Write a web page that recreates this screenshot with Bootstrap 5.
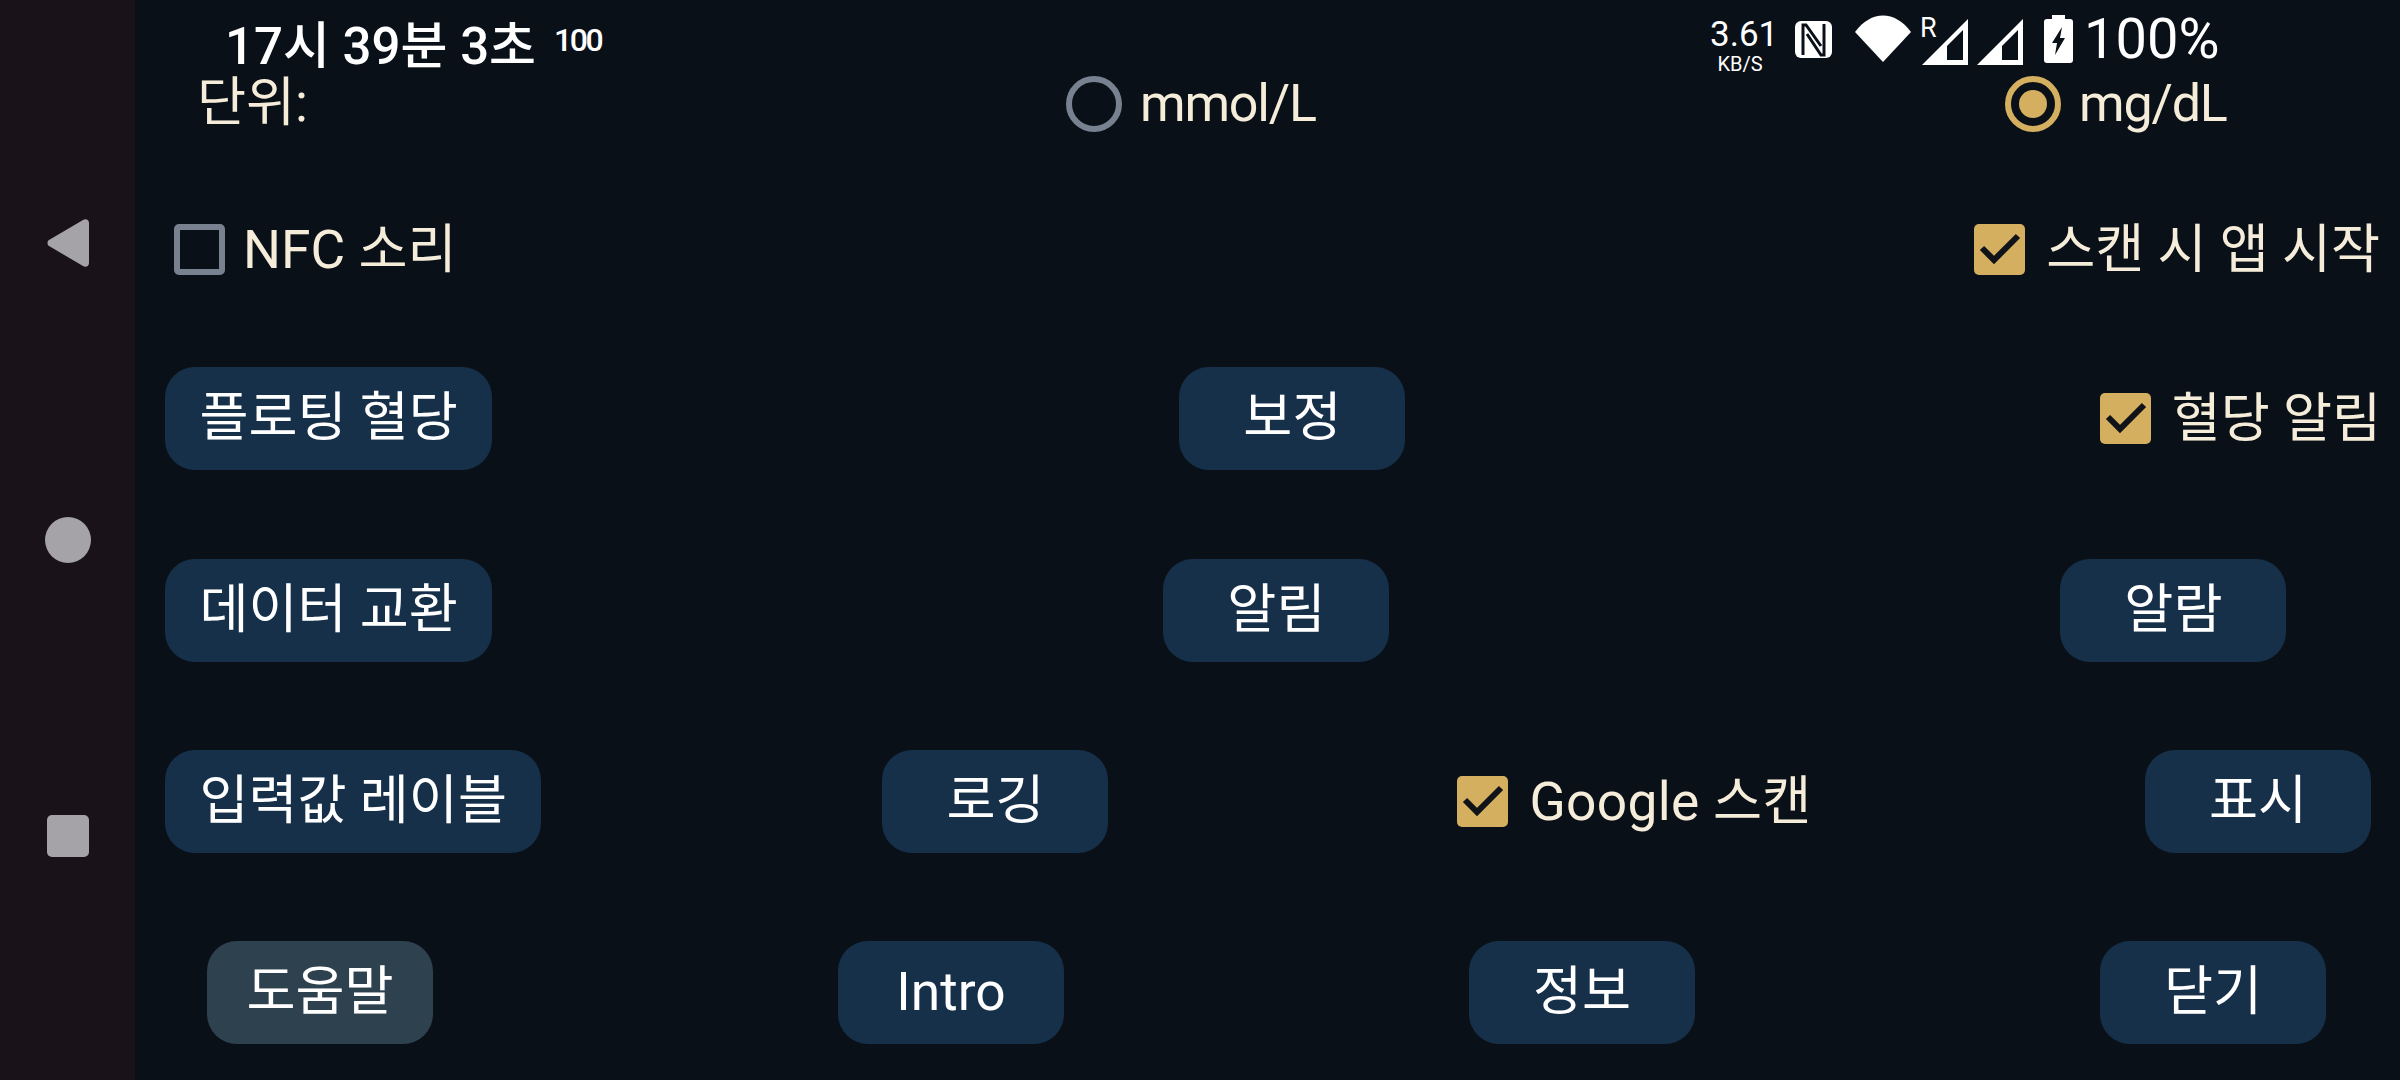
<!DOCTYPE html>
<html lang="ko">
<head>
    <meta charset="UTF-8">
    <meta name="viewport" content="width=device-width, initial-scale=1.0">
    <title>Settings</title>
    <link rel="stylesheet" href="https://cdn.jsdelivr.net/npm/bootstrap@5.3.0/dist/css/bootstrap.min.css">
    <style>
        body {
            background-color: #0a1018;
            font-family: Roboto, "Noto Sans CJK KR", sans-serif;
            overflow: hidden;
        }
        .app-shell { width: 2400px; height: 1080px; }
        .side-nav { width: 135px; background-color: #191219; }
        .form-area { min-width: 0; }
        .nav-back { margin-top: 219px; }
        .nav-home { margin-top: 250px; }
        .nav-stop { margin-top: 252px; }

        .status-strip { left: 0; top: 0; right: 0; height: 80px; color: #fff; }
        .clock { left: 225px; top: 14px; font-size: 51px; font-weight: 500; line-height: 66px; white-space: nowrap; }
        .clock-sup { left: 554px; top: 20px; font-size: 32px; font-weight: 500; line-height: 40px; letter-spacing: -2.5px; }
        .status-icons { left: 1710px; top: 15px; height: 48px; }
        .speed { width: 60px; text-align: center; line-height: 1; margin-top: 2px; margin-right: 25px; }
        .speed-num { font-size: 35px; display: block; }
        .speed-unit { font-size: 20px; display: block; margin-top: 2px; }
        .icon-nfc { margin-top: 6px; margin-right: 23px; }
        .icon-wifi { margin-right: 9px; }
        .sim-r { font-size: 27px; line-height: 27px; width: 14px; margin-right: -12px; }
        .icon-sig { margin-right: 9px; }
        .icon-sig2 { margin-right: 21px; }
        .icon-batt { margin-right: 11px; }
        .batt-text { font-size: 56px; line-height: 48px; }

        .form-line { height: 103px; color: #f5ecd9; font-size: 53.3px; white-space: nowrap; }
        .line-unit { margin-top: 52px; padding-left: 62px; }
        .line-unit .unit-label { width: 869px; }
        .line-unit .form-check:nth-child(2) { width: 939px; }
        .line-unit .form-check-label { font-size: 52px; letter-spacing: -1.2px; }
        .line-sound { margin-top: 43px; padding: 0 20px 0 39px; }
        .line-a { margin-top: 66px; padding: 0 19px 0 30px; gap: 687px; }
        .line-b { margin-top: 89px; padding-left: 30px; gap: 671px; }
        .line-c { margin-top: 88px; padding: 0 29px 0 30px; }
        .line-c .btn-log { margin-left: 341px; }
        .line-c .form-check { margin-left: 349px; }
        .line-c .form-check-label { letter-spacing: .3px; }
        .line-d { margin-top: 88px; padding-left: 72px; gap: 405px; }
        .push-end { margin-left: auto !important; }

        .form-check { display: flex; align-items: center; min-height: 0; padding-left: 0; margin: 0; }
        .form-check .form-check-input { float: none; margin: 0 21px 0 0; background-color: transparent; flex: none; }
        .form-check .form-check-input.tight-gap { margin-right: 18px; }
        .form-check .form-check-label { line-height: 70px; }
        .form-check-input[type=checkbox] {
            width: 51px; height: 51px; border: 6px solid #77818f; border-radius: 5px;
        }
        .form-check-input[type=checkbox]:checked {
            background-color: #d4af5f; border: 0; background-size: 51px 51px;
            background-image: url("data:image/svg+xml,%3csvg xmlns='http://www.w3.org/2000/svg' viewBox='0 0 51 51'%3e%3cpath fill='none' stroke='%23101418' stroke-width='6' d='M8 24l12 12L44 12'/%3e%3c/svg%3e");
        }
        .form-check-input[type=radio] {
            width: 56px; height: 56px; border: 6px solid #77818f;
        }
        .form-check-input[type=radio]:checked {
            background-color: transparent; border-color: #d4af5f; background-size: 28px 28px;
            background-image: url("data:image/svg+xml,%3csvg xmlns='http://www.w3.org/2000/svg' viewBox='0 0 28 28'%3e%3ccircle cx='14' cy='14' r='14' fill='%23d4af5f'/%3e%3c/svg%3e");
        }

        .tile-btn {
            height: 103px; min-width: 226px; padding: 0 34.5px; border: 0; border-radius: 30px;
            background-color: #16304a; color: #fff; font-size: 53.3px; line-height: 1;
            white-space: nowrap; flex: none;
        }
        .tile-btn.is-focus { background-color: #2e414f; }
    </style>
</head>
<body>
    <div class="app-shell d-flex position-relative">
        <!-- Navigation bar -->
        <div class="side-nav d-flex flex-column align-items-center flex-shrink-0">
            <svg class="nav-back" width="42" height="48" viewBox="0 0 42 48"><path fill="#a5a3a8" d="M2 21L36 1c3-2 6 0 6 3v40c0 3-3 5-6 3L2 27c-2-1-2-5 0-6z"/></svg>
            <svg class="nav-home" width="46" height="46" viewBox="0 0 46 46"><circle cx="23" cy="23" r="23" fill="#a5a3a8"/></svg>
            <svg class="nav-stop" width="42" height="42" viewBox="0 0 42 42"><rect width="42" height="42" rx="5" fill="#a5a3a8"/></svg>
        </div>

        <!-- Form -->
        <div class="form-area flex-grow-1 d-flex flex-column">
            <div class="form-line line-unit d-flex align-items-center">
                <div class="unit-label">단위:</div>
                <div class="form-check">
                    <input class="form-check-input tight-gap" type="radio" name="unit" id="unitMmol">
                    <label class="form-check-label" for="unitMmol">mmol/L</label>
                </div>
                <div class="form-check">
                    <input class="form-check-input tight-gap" type="radio" name="unit" id="unitMg" checked>
                    <label class="form-check-label" for="unitMg">mg/dL</label>
                </div>
            </div>
            <div class="form-line line-sound d-flex align-items-center">
                <div class="form-check">
                    <input class="form-check-input tight-gap" type="checkbox" id="nfcSound">
                    <label class="form-check-label" for="nfcSound">NFC 소리</label>
                </div>
                <div class="form-check push-end">
                    <input class="form-check-input" type="checkbox" id="scanStart" checked>
                    <label class="form-check-label" for="scanStart">스캔 시 앱 시작</label>
                </div>
            </div>
            <div class="form-line line-a d-flex align-items-center">
                <button type="button" class="btn tile-btn">플로팅 혈당</button>
                <button type="button" class="btn tile-btn">보정</button>
                <div class="form-check push-end">
                    <input class="form-check-input" type="checkbox" id="glucoseAlert" checked>
                    <label class="form-check-label" for="glucoseAlert">혈당 알림</label>
                </div>
            </div>
            <div class="form-line line-b d-flex align-items-center">
                <button type="button" class="btn tile-btn">데이터 교환</button>
                <button type="button" class="btn tile-btn">알림</button>
                <button type="button" class="btn tile-btn">알람</button>
            </div>
            <div class="form-line line-c d-flex align-items-center">
                <button type="button" class="btn tile-btn">입력값 레이블</button>
                <button type="button" class="btn tile-btn btn-log">로깅</button>
                <div class="form-check">
                    <input class="form-check-input" type="checkbox" id="googleScan" checked>
                    <label class="form-check-label" for="googleScan">Google 스캔</label>
                </div>
                <button type="button" class="btn tile-btn push-end">표시</button>
            </div>
            <div class="form-line line-d d-flex align-items-center">
                <button type="button" class="btn tile-btn is-focus">도움말</button>
                <button type="button" class="btn tile-btn">Intro</button>
                <button type="button" class="btn tile-btn">정보</button>
                <button type="button" class="btn tile-btn">닫기</button>
            </div>
        </div>

        <!-- Status bar -->
        <div class="status-strip position-absolute">
            <div class="clock position-absolute">17시 39분 3초</div>
            <div class="clock-sup position-absolute">100</div>
            <div class="status-icons position-absolute d-flex align-items-start">
                <div class="speed"><span class="speed-num">3.61</span><span class="speed-unit">KB/S</span></div>
                <svg class="icon-nfc" width="37" height="37" viewBox="0 0 37 37"><rect width="37" height="37" rx="6" fill="#fff"/><path fill="none" stroke="#0a1018" stroke-width="3" d="M8 34V4h3l15 21M29 3v31h-3L12 13"/></svg>
                <svg class="icon-wifi" width="56" height="47" viewBox="0 0 56 47"><path fill="#fff" d="M0 17C16-5 40-5 56 17L28 47z"/></svg>
                <div class="sim-r">R</div>
                <svg class="icon-sig mt-1" width="46" height="46" viewBox="0 0 46 46"><path fill="#fff" fill-rule="evenodd" d="M0 46L46 0v46zM25 41h16V11L25 27z"/></svg>
                <svg class="icon-sig2 mt-1" width="46" height="46" viewBox="0 0 46 46"><path fill="#fff" fill-rule="evenodd" d="M0 46L46 0v46zM25 41h16V11L25 27z"/></svg>
                <svg class="icon-batt" width="29" height="48" viewBox="0 0 29 48"><path fill="#fff" fill-rule="evenodd" d="M8 0h13v4h5a3 3 0 0 1 3 3v38a3 3 0 0 1-3 3H3a3 3 0 0 1-3-3V7a3 3 0 0 1 3-3h5zM18 12L8 28h5l-2 12 10-17h-5z"/></svg>
                <div class="batt-text">100%</div>
            </div>
        </div>
    </div>
    <script src="https://cdn.jsdelivr.net/npm/bootstrap@5.3.0/dist/js/bootstrap.bundle.min.js"></script>
</body>
</html>
